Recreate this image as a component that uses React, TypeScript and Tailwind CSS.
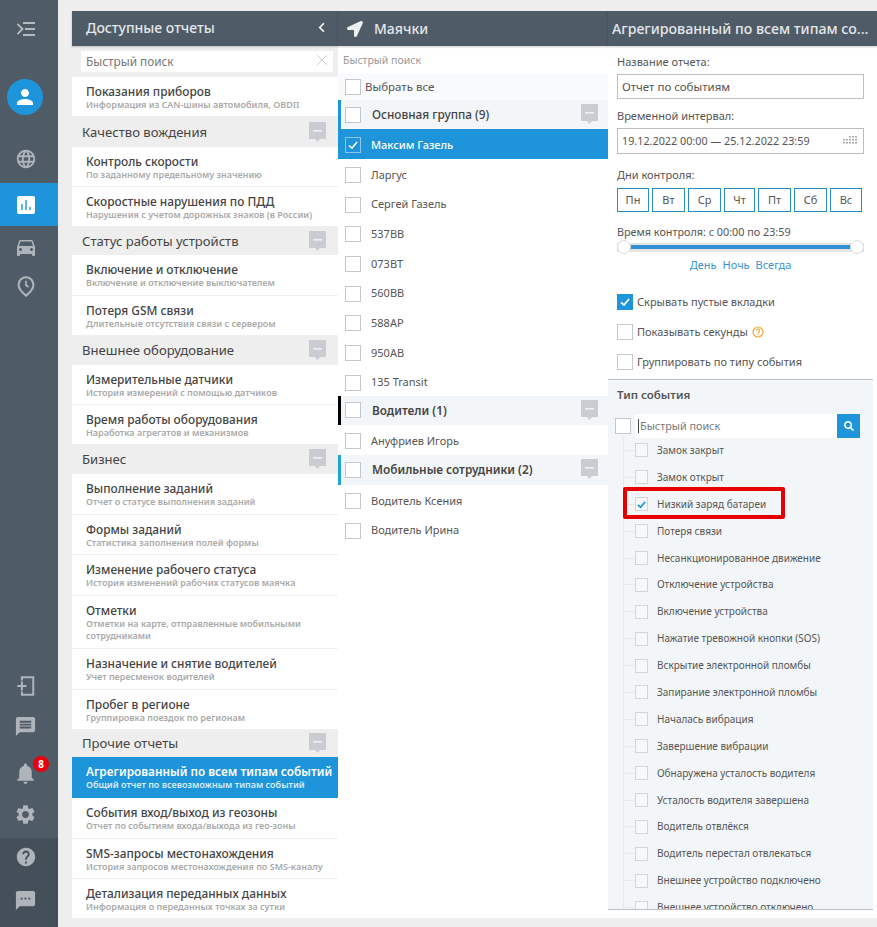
import React from "react";
import { MdLanguage, MdDirectionsCar, MdMessage, MdNotifications, MdSettings, MdHelp, MdSms, MdPerson } from "react-icons/md";
import { FaLocationArrow, FaSearch, FaChevronLeft } from "react-icons/fa";

function Toggle() {
  return (
    <svg width="17" height="21" viewBox="0 0 17 21" className="shrink-0">
      <path d="M0 0H17V17H11L8.5 20L6 17H0Z" fill="#c9cdd1" />
      <rect x="4" y="8" width="9" height="1.6" fill="#eef0f2" />
    </svg>
  );
}

function Box({ checked, small, blue }: { checked?: boolean; small?: boolean; blue?: boolean }) {
  const size = small ? "w-[13px] h-[14px]" : "w-4 h-4";
  const look = blue ? "border-[#1e94da] bg-[#1e94da]" : small ? "border-[#d3d6d9] bg-[#f7f8f9]" : "border-[#c4c8cc] bg-white";
  return (
    <span className={`${size} shrink-0 flex items-center justify-center border ${look}`}>
      {checked && (
        <svg width={small ? 11 : 12} height={small ? 11 : 12} viewBox="0 0 12 12" fill="none">
          <path d="M2 6.5L5 9L10 3" stroke={blue ? "#fff" : "#1e94da"} strokeWidth="1.8" />
        </svg>
      )}
    </span>
  );
}

type G = { k: "g"; t: string; h: number };
type I = { k: "i"; t: string; s: string; h: number; s2?: string; a?: boolean };

const reports: (G | I)[] = [
  { k: "i", t: "Показания приборов", s: "Информация из CAN-шины автомобиля, OBDII", h: 40 },
  { k: "g", t: "Качество вождения", h: 30 },
  { k: "i", t: "Контроль скорости", s: "По заданному предельному значению", h: 40 },
  { k: "i", t: "Скоростные нарушения по ПДД", s: "Нарушения с учетом дорожных знаков (в России)", h: 40 },
  { k: "g", t: "Статус работы устройств", h: 28 },
  { k: "i", t: "Включение и отключение", s: "Включение и отключение выключателем", h: 41 },
  { k: "i", t: "Потеря GSM связи", s: "Длительные отсутствия связи с сервером", h: 40 },
  { k: "g", t: "Внешнее оборудование", h: 29 },
  { k: "i", t: "Измерительные датчики", s: "История измерений с помощью датчиков", h: 40 },
  { k: "i", t: "Время работы оборудования", s: "Наработка агрегатов и механизмов", h: 40 },
  { k: "g", t: "Бизнес", h: 29 },
  { k: "i", t: "Выполнение заданий", s: "Отчет о статусе выполнения заданий", h: 41 },
  { k: "i", t: "Формы заданий", s: "Статистика заполнения полей формы", h: 40 },
  { k: "i", t: "Изменение рабочего статуса", s: "История изменений рабочих статусов маячка", h: 41 },
  { k: "i", t: "Отметки", s: "Отметки на карте, отправленные мобильными", s2: "сотрудниками", h: 53 },
  { k: "i", t: "Назначение и снятие водителей", s: "Учет пересменок водителей", h: 41 },
  { k: "i", t: "Пробег в регионе", s: "Группировка поездок по регионам", h: 40 },
  { k: "g", t: "Прочие отчеты", h: 27 },
  { k: "i", t: "Агрегированный по всем типам событий", s: "Общий отчет по всевозможным типам событий", h: 41, a: true },
  { k: "i", t: "События вход/выход из геозоны", s: "Отчет по событиям входа/выхода из гео-зоны", h: 41 },
  { k: "i", t: "SMS-запросы местонахождения", s: "История запросов местонахождения по SMS-каналу", h: 40 },
  { k: "i", t: "Детализация переданных данных", s: "Информация о переданных точках за сутки", h: 40 },
];

const events = [
  "Замок закрыт", "Замок открыт", "Низкий заряд батареи", "Потеря связи", "Несанкционированное движение",
  "Отключение устройства", "Включение устройства", "Нажатие тревожной кнопки (SOS)", "Вскрытие электронной пломбы",
  "Запирание электронной пломбы", "Началась вибрация", "Завершение вибрации", "Обнаружена усталость водителя",
  "Усталость водителя завершена", "Водитель отвлёкся", "Водитель перестал отвлекаться", "Внешнее устройство подключено",
  "Внешнее устройство отключено",
];

const days = [
  ["Пн", "w-8"], ["Вт", "w-[33px]"], ["Ср", "w-[33px]"], ["Чт", "w-[31px]"], ["Пт", "w-[33px]"], ["Сб", "w-[33px]"], ["Вс", "w-8"],
];

function Row({ t, checked, active }: { t: string; checked?: boolean; active?: boolean }) {
  return (
    <div className={`h-[29.67px] pt-[3px] flex items-center pl-[7px] text-[11px] ${active ? "bg-[#1e94da] text-white font-medium" : "text-[#555]"}`}>
      {active ? (
        <span className="w-4 h-4 border border-[#8cc8ec] flex items-center justify-center">
          <svg width="12" height="12" viewBox="0 0 12 12" fill="none"><path d="M2 6.5L5 9L10 3" stroke="#fff" strokeWidth="1.6" /></svg>
        </span>
      ) : <Box checked={checked} />}
      <span className="ml-[10px]">{t}</span>
    </div>
  );
}

function GroupRow({ t, color, h, bold }: { t: string; color: string; h: string; bold?: boolean }) {
  return (
    <div className={`${h} flex items-center bg-[#f3f6f8] border-l-[3px] ${color} pl-1 pr-[10px]`}>
      <Box />
      <span className={`ml-[11px] flex-1 text-[11.8px] text-[#444] ${bold ? "font-semibold" : "font-medium"}`}>{t}</span>
      <Toggle />
    </div>
  );
}

export default function App() {
  return (
    <div className="w-[877px] h-[927px] flex bg-[#eeeeee] overflow-hidden" style={{ fontFamily: '"Noto Sans", "Open Sans", sans-serif' }}>
      <aside className="w-[58px] h-full bg-[#4f5b66] flex flex-col items-stretch text-[#aeb4ba] shrink-0">
        <div className="h-[58px] pr-[7px] flex items-center justify-center">
          <svg width="18" height="14" viewBox="0 0 18 14" fill="none" stroke="#b6bbc0" strokeWidth="1.8">
            <path d="M0.5 2L5.5 7L0.5 12" /><path d="M6 1H18M8 7H18M6 13H18" />
          </svg>
        </div>
        <div className="mt-[21px] ml-[7px] w-9 h-9 rounded-full bg-[#1e94da] flex items-center justify-center text-white">
          <MdPerson size={24} />
        </div>
        <div className="mt-[27px] h-[34px] pr-[7px] flex items-center justify-center"><MdLanguage size={22} /></div>
        <div className="mt-[7px] h-[43px] pr-[7px] bg-[#1e94da] flex items-center justify-center">
          <svg width="18" height="18" viewBox="0 0 18 18">
            <rect width="18" height="18" rx="2" fill="#fff" />
            <path d="M5 8V14M9 4V14M13 11V14" stroke="#1e94da" strokeWidth="1.4" />
          </svg>
        </div>
        <div className="mt-1 h-[34px] pr-[7px] flex items-center justify-center"><MdDirectionsCar size={24} /></div>
        <div className="mt-[5px] h-[34px] pr-[7px] flex items-center justify-center">
          <svg width="18" height="21" viewBox="0 0 20 24" fill="none" stroke="#aeb4ba" strokeWidth="2.4">
            <path d="M10 22.5C5 18.5 1.5 14.5 1.5 10a8.5 8.5 0 0 1 17 0c0 4.500-3.500 8.500-8.500 12.500Z" />
            <path d="M10 5.500V10.500L13 12.500" strokeWidth="2" />
          </svg>
        </div>
        <div className="flex-1" />
        <div className="h-[34px] pr-[7px] flex items-center justify-center">
          <svg width="18" height="20" viewBox="0 0 19 22" fill="none" stroke="#aeb4ba" strokeWidth="2.2">
            <path d="M5 5V1.500H17.500V20.500H5V17" /><path d="M0 11H10M5 6V16" />
          </svg>
        </div>
        <div className="mt-[6px] h-[34px] pr-[7px] flex items-center justify-center"><MdMessage size={23} /></div>
        <div className="mt-[13px] h-[34px] pr-[7px] flex items-center justify-center relative">
          <MdNotifications size={25} />
          <span className="absolute left-[33px] top-0 w-4 h-4 rounded-full bg-[#e8000f] text-white text-[10px] font-bold flex items-center justify-center">8</span>
        </div>
        <div className="mt-[7px] h-[34px] pr-[7px] flex items-center justify-center"><MdSettings size={23} /></div>
        <div className="mt-[7px] h-[89px] pr-[7px] bg-[#454f59] flex flex-col items-center">
          <div className="mt-[2px] h-[34px] flex items-center justify-center"><MdHelp size={22} /></div>
          <div className="mt-[9px] h-[34px] flex items-center justify-center"><MdSms size={23} /></div>
        </div>
      </aside>

      <main className="flex-1 pl-[14px] pt-[11px] pb-[9px] flex min-w-0">
        <section className="w-[266px] flex flex-col min-h-0">
          <header className="h-[35px] shrink-0 bg-[#4f5b66] text-[#e4e7ea] text-[14px] font-medium flex items-center pl-[14px] pr-[11px] pb-[3px] shadow-[0_1px_2px_rgba(0,0,0,0.2)] relative">
            <span className="flex-1">Доступные отчеты</span>
            <FaChevronLeft size={11} className="text-[#eef0f2]" />
          </header>
          <div className="h-[31px] shrink-0 bg-[#eeeeee] pl-[9px] pr-[5px] pt-[5px]">
            <div className="h-[21px] bg-white flex items-center pl-[5px] pr-[6px] text-[11.8px] text-[#777]">
              <span className="flex-1 pt-px">Быстрый поиск</span>
              <svg width="10" height="10" viewBox="0 0 10 10" stroke="#ccc" strokeWidth="1" className="mb-[3px]"><path d="M0 0L10 10M10 0L0 10" /></svg>
            </div>
          </div>
          <div className="flex-1 min-h-0 overflow-hidden">
            {reports.map((r, i) =>
              r.k === "g" ? (
                <div key={i} style={{ height: r.h }} className="bg-[#eeeeee] flex items-center pl-[10px] pr-3 text-[13.1px] text-[#444]">
                  <span className="flex-1 pt-px">{r.t}</span>
                  <Toggle />
                </div>
              ) : (
                <div key={i} style={{ height: r.h }} className={`pl-[14px] flex flex-col justify-center border-b ${r.a ? "bg-[#1e94da] text-white border-[#1e94da]" : "bg-white text-[#444] border-[#f0f0f0]"}`}>
                  <div className={`leading-[16px] whitespace-nowrap ${r.a ? "text-[11.8px] font-semibold" : "text-[11.9px] font-medium"}`}>{r.t}</div>
                  <div className={`text-[9px] leading-[12px] font-semibold ${r.a ? "text-[#d8edf9]" : "text-[#aaaaaa]"}`}>{r.s}</div>
                  {r.s2 && <div className="text-[9px] leading-[12px] font-semibold text-[#aaaaaa]">{r.s2}</div>}
                </div>
              )
            )}
          </div>
        </section>

        <section className="w-[270px] flex flex-col min-h-0 bg-white">
          <header className="h-[35px] shrink-0 bg-[#4f5b66] text-[#e4e7ea] text-[14px] font-medium flex items-center pl-[9px] shadow-[0_1px_2px_rgba(0,0,0,0.2)] relative">
            <FaLocationArrow size={16} className="text-[#eef0f2]" />
            <span className="ml-[11px]">Маячки</span>
          </header>
          <div className="h-[28px] shrink-0 flex items-center pl-[5px] text-[10.5px] text-[#999] pt-[2px]">Быстрый поиск</div>
          <div className="h-[26px] shrink-0 bg-[#f9fafb] flex items-center pl-[7px] text-[11.5px] text-[#555]">
            <Box />
            <span className="ml-1">Выбрать все</span>
          </div>
          <GroupRow t="Основная группа (9)" color="border-[#1e94da]" h="h-[29px]" />
          <Row t="Максим Газель" active />
          {["Ларгус", "Сергей Газель", "537ВВ", "073ВТ", "560ВВ", "588АР", "950АВ", "135 Transit"].map((t) => <Row key={t} t={t} />)}
          <GroupRow t="Водители (1)" color="border-black" h="h-[29px]" bold />
          <Row t="Ануфриев Игорь" />
          <GroupRow t="Мобильные сотрудники (2)" color="border-[#1ea4dc]" h="h-[30px]" bold />
          <Row t="Водитель Ксения" />
          <Row t="Водитель Ирина" />
        </section>

        <section className="w-[269px] flex flex-col min-h-0 bg-white">
          <header className="h-[35px] shrink-0 bg-[#4f5b66] text-[#e4e7ea] text-[14.2px] font-medium flex items-center pl-[4px] whitespace-nowrap shadow-[0_1px_2px_rgba(0,0,0,0.2)] relative">
            Агрегированный по всем типам со...
          </header>
          <div className="pl-[9px] pr-[13px] text-[11px] text-[#555]">
            <div className="mt-[8px] leading-[15px]">Название отчета:</div>
            <div className="mt-[5px] h-[25px] border border-[#bdbdbd] flex items-center pl-[4px] text-[11.5px]">Отчет по событиям</div>
            <div className="mt-[9px] leading-[15px]">Временной интервал:</div>
            <div className="mt-[5px] h-[26px] border border-[#bdbdbd] flex items-center pl-[4px] pr-1 text-[10.8px]">
              <span className="flex-1">19.12.2022 00:00 — 25.12.2022 23:59</span>
              <svg width="16" height="10" viewBox="0 0 16 10" fill="#a8a8a8">
                <path d="M0 3h2v1.500H0zM3 3h2v1.500H3zM6 0h2v1.500H6zM9 0h2v1.500H9zM12 0h2v1.500h-2zM0 6h2v1.500H0zM3 6h2v1.500H3zM6 3h2v1.500H6zM9 3h2v1.500H9zM12 3h2v1.500h-2zM6 6h2v1.500H6zM9 6h2v1.500H9zM12 6h2v1.500h-2z" />
              </svg>
            </div>
            <div className="mt-[13px] leading-[15px]">Дни контроля:</div>
            <div className="mt-[6px] flex gap-[3px]">
              {days.map(([d, w]) => (
                <div key={d} className={`${w} h-6 border border-[#2b8cc0] flex items-center justify-center text-[11px]`}>{d}</div>
              ))}
            </div>
            <div className="mt-[12px] leading-[15px] text-[10.8px]">Время контроля: с 00:00 по 23:59</div>
            <div className="mt-[1px] h-[14px] relative flex items-center">
              <div className="w-full h-[9px] bg-[#e3e3e3] flex items-center px-[7px]">
                <div className="w-full h-[3.5px] bg-[#2f8fd0]" />
              </div>
              <span className="absolute left-0 top-0 w-[14px] h-[14px] rounded-full bg-white border border-[#ddd]" />
              <span className="absolute right-0 top-0 w-[14px] h-[14px] rounded-full bg-white border border-[#ddd]" />
            </div>
            <div className="mt-[3px] flex justify-center gap-[6px] text-[11px] text-[#3a93cf] leading-[15px]">
              <span>День</span><span>Ночь</span><span>Всегда</span>
            </div>
            <div className="mt-[22px] flex items-center h-4">
              <Box checked blue />
              <span className="ml-1">Скрывать пустые вкладки</span>
            </div>
            <div className="mt-[14px] flex items-center h-4">
              <Box />
              <span className="ml-1">Показывать секунды</span>
              <svg width="12" height="12" viewBox="0 0 12 12" className="ml-1" fill="none">
                <circle cx="6" cy="6" r="5" stroke="#f0a830" strokeWidth="1.2" />
                <path d="M4.300 4.600a1.700 1.700 0 1 1 2.700 1.400c-.6.400-1 .7-1 1.400M6 8.300v1" stroke="#f0a830" strokeWidth="1.1" />
              </svg>
            </div>
            <div className="mt-[14px] flex items-center h-4">
              <Box />
              <span className="ml-1">Группировать по типу события</span>
            </div>
          </div>
          <div className="relative mt-[9px] mb-2 mr-[4px] flex-1 min-h-0 bg-[#f3f6f8] border-y border-[#bcc0c4] overflow-hidden">
            <div className="mt-[7px] ml-[9px] text-[11.5px] font-semibold text-[#555] leading-4">Тип события</div>
            <div className="mt-[11px] ml-[7px] mr-[13px] flex items-center h-6">
              <Box />
              <div className="ml-1 flex-1 h-full bg-white flex items-center pl-[3px] text-[10.8px] text-[#777]">
                <span className="w-px h-[14px] bg-[#444] mr-[1px]" />Быстрый поиск
              </div>
              <div className="w-[23px] h-full bg-[#1e94da] flex items-center justify-center text-white"><FaSearch size={10} /></div>
            </div>
            <div className="-mt-px pl-[15px] relative">
              <div className="absolute left-[15px] top-0 bottom-0 w-px bg-[#e6e8ea]" />
              {events.map((e, i) => (
                <div key={e} className="h-[26.9px] flex items-center relative">
                  <span className="w-3 h-px bg-[#e6e8ea]" />
                  <Box small checked={i === 2} />
                  <span className="ml-[9px] text-[10px] text-[#555] whitespace-nowrap">{e}</span>
                </div>
              ))}
            </div>
            <div className="absolute left-[15px] top-[107px] w-[162px] h-[32px] border-[4px] border-[#e60000] rounded-[2px]" />
          </div>
        </section>
      </main>
    </div>
  );
}
